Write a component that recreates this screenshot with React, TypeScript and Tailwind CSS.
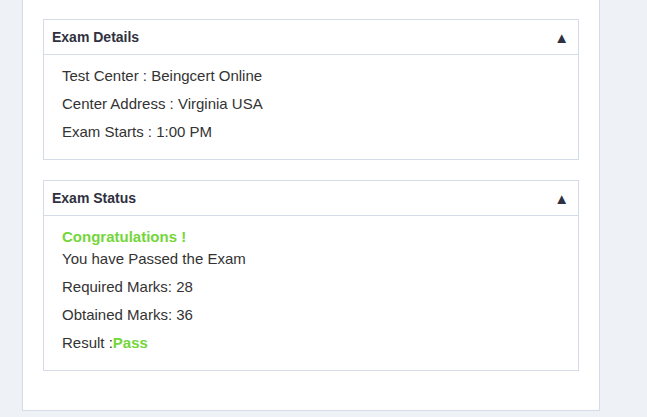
import React from 'react';

function Panel({ title, children, bodyClass }: { title: string; children: React.ReactNode; bodyClass: string }) {
  return (
    <section className="border border-[#d5dce8] bg-white">
      <div className="h-[35px] flex items-center justify-between pl-[8px] pr-[9px] border-b border-[#d5dce8]">
        <h3 className="text-[14px] font-bold text-[#2f3140]">{title}</h3>
        <span className="text-[15px] leading-none text-[#2f3140]">▲</span>
      </div>
      <div className={`pl-[18px] pt-[11px] text-[15px] leading-5 text-[#333] ${bodyClass}`}>{children}</div>
    </section>
  );
}

export default function App() {
  return (
    <div className="min-h-screen bg-[#eef1f5] font-['Liberation_Sans',Arial,sans-serif]">
      <div className="ml-[22px] w-[578px] bg-white border-x border-b border-[#d5dce8] pt-[19px] pb-[39px] px-[20px] flex flex-col gap-[20px]">
        <Panel title="Exam Details" bodyClass="pb-[9px]">
          <p className="mb-2">Test Center : Beingcert Online</p>
          <p className="mb-2">Center Address : Virginia USA</p>
          <p className="mb-2">Exam Starts : 1:00 PM</p>
        </Panel>
        <Panel title="Exam Status" bodyClass="pb-[9px]">
          <p className="mb-0.5 font-bold text-[#74d63a]">Congratulations !</p>
          <p className="mb-2">You have Passed the Exam</p>
          <p className="mb-2">Required Marks: 28</p>
          <p className="mb-2">Obtained Marks: 36</p>
          <p className="mb-2">
            Result :<span className="font-bold text-[#74d63a]">Pass</span>
          </p>
        </Panel>
      </div>
    </div>
  );
}
